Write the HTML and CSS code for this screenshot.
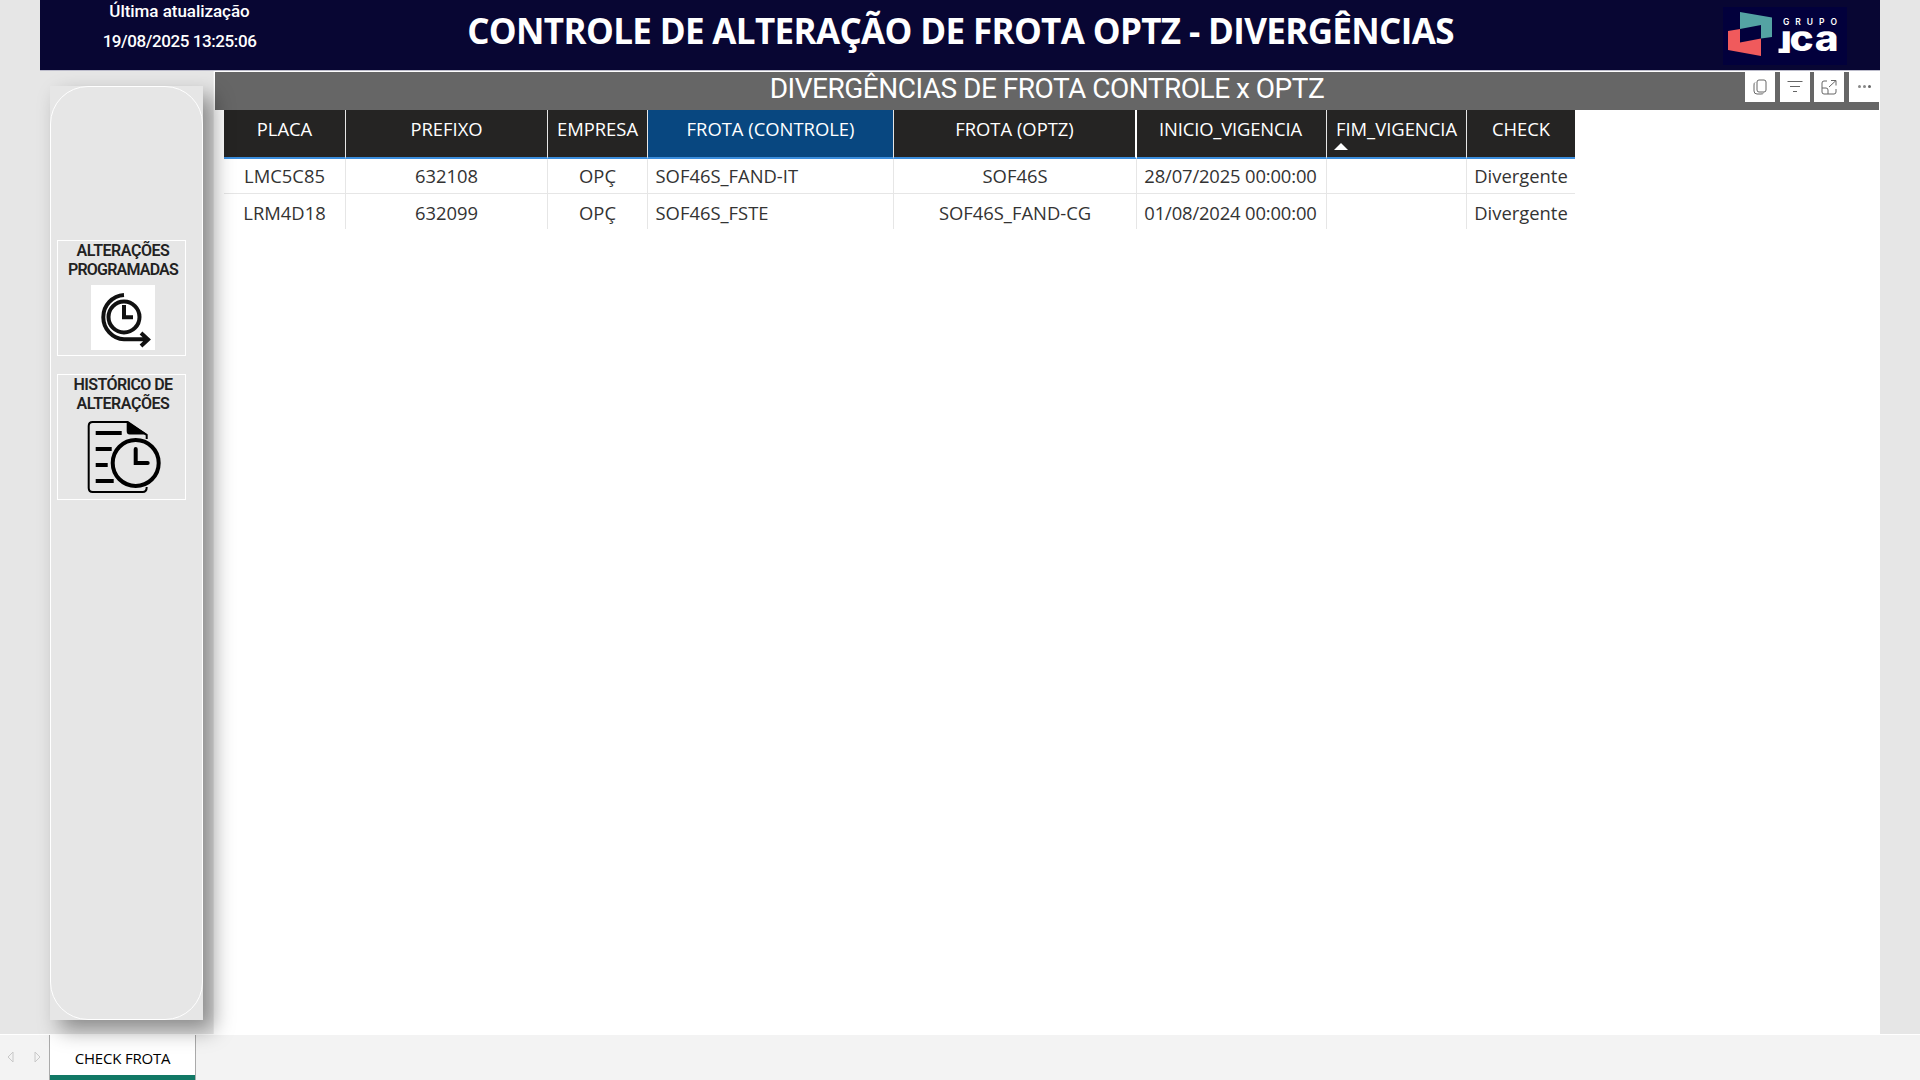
FILE: index.html
```html
<!DOCTYPE html>
<html lang="pt-BR"><head><meta charset="utf-8"><title>Check Frota</title><link rel="stylesheet" href="styles.css"></head>
<body>
<div class="report">
<header class="header">
<div class="updated"><span class="u1">Última atualização</span><span class="u2">19/08/2025 13:25:06</span></div>
<h1 class="title"><span>CONTROLE DE ALTERAÇÃO DE FROTA OPTZ - DIVERGÊNCIAS</span></h1>
<svg class="logo" viewBox="0 0 124 58" width="124" height="58">
<defs><clipPath id="word"><rect x="40" y="24.300" width="74" height="21.700"/></clipPath></defs>
<rect width="124" height="58" fill="#02003c"/>
<path fill="#54a3a3" d="M17 5 49 10.500V30L38 31.500V18L17 22Z"/>
<path fill="#f05a5c" d="M5 24 17 22V35.500L38 31.500V49L5 43Z"/>
<text class="logo-small" x="60" y="18" textLength="54">GRUPO</text>
<g transform="scale(1.13 1)" clip-path="url(#word)"><text class="logo-big" x="50.800 58.800 81.300" y="43.700">jca</text></g>
<path fill="#fff" d="M55.500 41.500H61V46H55.500Z"/>
</svg>
</header>
<div class="body">
<aside class="sidebar"><nav class="menu">
<a class="card card-a"><span class="label"><span class="l1">ALTERAÇÕES</span><span class="l2">PROGRAMADAS</span></span>
<svg width="64" height="65" viewBox="0 0 64 65"><rect width="64" height="65" fill="#fff"/><g fill="none" stroke="#111" stroke-width="4"><circle cx="33" cy="32" r="15.500"/><path d="M33 10A22.200 22.200 0 0 0 33 54.300H57M50 48 57 54.500 50 61M33 20V32.300H42"/></g></svg></a>
<a class="card card-b"><span class="label"><span class="l3">HISTÓRICO DE</span><span class="l1">ALTERAÇÕES</span></span>
<svg width="76" height="76" viewBox="-.7 0 76 76"><g fill="none" stroke="#000"><path stroke-width="2" d="M61 20V16L42 3H7Q3 3 3 7V69Q3 73 7 73H57Q61 73 61 68"/><path fill="#000" stroke="none" d="M41 2 62 15.500H44Q41 15.500 41 12Z"/><path stroke-width="4" d="M10 14H36M10 30H26M10 46H22M10 62H28"/><circle cx="50" cy="44" r="23" stroke-width="4"/><path stroke-width="4" stroke-linecap="round" d="M50 30V44H62"/></g></svg></a>
</nav></aside>
<main class="main">
<div class="subbar"><h2 class="subtitle"><span>DIVERGÊNCIAS DE FROTA CONTROLE x OPTZ</span></h2>
<div class="tools">
<button class="tool"><svg width="18" height="18" viewBox="0 0 18 18"><rect x="6" y="2" width="9" height="12" rx="2"/><path d="M4 4.500Q3 5 3 7V13Q3 16 6 16H10Q12 16 12.500 15"/></svg></button>
<button class="tool"><svg width="18" height="18" viewBox="0 0 18 18"><path d="M1.500 3.500H16.500M4 8.500H14M7 13.500H11"/></svg></button>
<button class="tool"><svg width="18" height="18" viewBox="0 0 18 18"><path d="M7 3H4Q2 3 2 5V14Q2 16 4 16H14Q16 16 16 14V11M2 10H6Q8 10 8 12V16M9 9 16 2.500M11 2.500H16V7.500"/></svg></button>
<button class="tool dots"><i></i><i></i><i></i></button>
</div></div>
<table class="grid"><colgroup><col class="c1"><col class="c2"><col class="c3"><col class="c4"><col class="c5"><col class="c6"><col class="c7"><col class="c8"></colgroup>
<thead><tr><th>PLACA</th><th>PREFIXO</th><th>EMPRESA</th><th class="sel">FROTA (CONTROLE)</th><th class="wide">FROTA (OPTZ)</th><th class="date">INICIO_VIGENCIA</th><th class="sorted">FIM_VIGENCIA</th><th>CHECK</th></tr></thead>
<tbody><tr><td>LMC5C85</td><td>632108</td><td>OPÇ</td><td class="left">SOF46S_FAND-IT</td><td>SOF46S</td><td class="date">28/07/2025 00:00:00</td><td></td><td>Divergente</td></tr>
<tr><td>LRM4D18</td><td>632099</td><td>OPÇ</td><td class="left">SOF46S_FSTE</td><td>SOF46S_FAND-CG</td><td class="date">01/08/2024 00:00:00</td><td></td><td>Divergente</td></tr></tbody></table>
</main></div></div>
<footer class="tabs"><div class="arrows"><svg width="7" height="12" viewBox="0 0 7 12"><path d="M6 1V11L1 6Z"/></svg><svg width="7" height="12" viewBox="0 0 7 12"><path d="M1 1V11L6 6Z"/></svg></div><div class="tab">CHECK FROTA</div></footer>
</body></html>
```
FILE: styles.css
```css
* { box-sizing: border-box; }
body { margin: 0; width: 1920px; height: 1080px; overflow: hidden; background: #e6e6e6; font-family: "Open Sans", "Noto Sans", sans-serif; display: flex; flex-direction: column; }
h1, h2 { margin: 0; }
.report { width: 1840px; height: 1034px; margin-left: 40px; display: flex; flex-direction: column; flex: none; }
.header { height: 71px; flex: none; background: #080633; border-bottom: 1px solid #bcbccb; color: #fff; display: flex; }
.updated { width: 279px; display: flex; flex-direction: column; align-items: center; font: 500 17px/30px Roboto, sans-serif; margin-top: -4px; }
.u1 { letter-spacing: -.05px; }
.u2 { letter-spacing: -.42px; }
.title { width: 1283px; text-align: center; font-size: 35px; line-height: 62px; font-weight: 700; white-space: nowrap; letter-spacing: -.65px; }
.logo { margin: 7px 0 0 121px; }
.logo-small { font: 600 8.500px Inter, sans-serif; fill: #fff; }
.logo-big { font: 800 36px Inter, sans-serif; fill: #fff; }
.body { flex: 1; display: flex; }
.sidebar { width: 173px; padding: 15px 0 0 10px; }
.menu { position: relative; width: 153px; height: 934px; background: #e6e6e6; box-shadow: 10px 10px 20px rgba(0,0,0,.4); padding: 154px 0 0 7px; z-index: 1; }
.menu::before { content: ""; position: absolute; inset: 0; border: 1.500px solid #fff; border-radius: 38px; }
.card { display: flex; flex-direction: column; align-items: center; width: 129px; padding: 1px 0 0 3px; border: 1px solid #fff; }
.card-a { height: 116px; margin-bottom: 18px; }
.card-b { height: 126px; }
.label { display: flex; flex-direction: column; align-items: center; margin-bottom: 6px; font: 600 16px/18.500px Roboto, sans-serif; color: #222; }
.l1 { letter-spacing: -.45px; }
.l2 { letter-spacing: -.8px; }
.l3 { letter-spacing: -.6px; }
.main { flex: 1; background: #fff; border-left: 1px solid #eee; padding-top: 1px; }
.subbar { position: relative; height: 38px; margin-left: 1px; margin-right: 1px; background: #666; color: #fff; }
.subtitle { text-align: center; font: 400 28px/34px Roboto, sans-serif; letter-spacing: -.5px; }
.tools { position: absolute; top: 0; right: 0; display: flex; gap: 4.700px; }
.tool { width: 30px; height: 29.500px; padding: 0; border: 0; background: #fff; display: flex; align-items: center; justify-content: center; }
.tool svg { fill: none; stroke: #666; stroke-width: 1; }
.dots { gap: 2px; }
.dots i { width: 3px; height: 3px; border-radius: 50%; background: #888; }
.dots i:last-child { background: #666; }
.grid { margin-left: 10px; border-collapse: separate; border-spacing: 0; table-layout: fixed; width: 1351px; font-size: 18.400px; color: #333; }
.c1 { width: 122px; } .c2 { width: 202px; } .c3 { width: 100px; } .c4 { width: 246px; } .c5 { width: 243px; } .c6 { width: 190px; } .c7 { width: 140px; } .c8 { width: 108px; }
.grid th, .grid td { padding: 0; text-align: center; font-weight: 400; white-space: nowrap; border-right: 1px solid #e6e6e6; }
.grid th { height: 49px; background: #252423; color: #fff; border-bottom: 2px solid #3b8ede; vertical-align: top; line-height: 37px; }
.grid th.sel { background: #084780; }
.grid th.wide { border-right: 2px solid #fff; }
.grid th:last-child, .grid td:last-child { border-right: 0; }
.sorted { position: relative; }
.sorted::after { content: ""; position: absolute; left: 7px; top: 33px; border: 7px solid transparent; border-top: 0; border-bottom-color: #fff; }
.grid td { height: 35px; line-height: 34px; border-bottom: 1px solid #e6e6e6; }
.grid tbody tr:last-child td { height: 35px; line-height: 33px; padding-top: 2px; border-bottom: 0; }
.grid td.left { text-align: left; padding-left: 7.500px; }
.grid .date { letter-spacing: -.15px; padding-right: 2px; }
.tabs { height: 46px; background: #f3f3f3; border-top: 1px solid #fff; display: flex; }
.arrows { width: 49px; padding: 16px 8px 0 7px; display: flex; justify-content: space-between; }
.arrows svg { fill: none; stroke: #c8c8c8; }
.tab { width: 147px; background: #fff; border: solid #aaa; border-width: 0 1px; box-shadow: inset 0 -5px #117865; font-size: 15px; letter-spacing: -.2px; text-align: center; line-height: 46px; }
```
